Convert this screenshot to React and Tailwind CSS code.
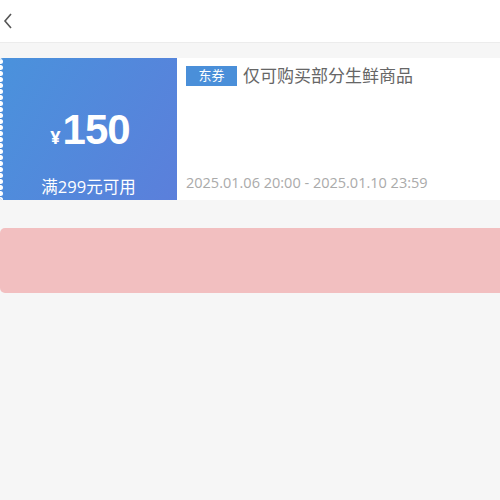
export default function App() {
  const dots = Array.from({ length: 24 });
  return (
    <div className="w-[500px] h-[500px] bg-[#f6f6f6] overflow-hidden" style={{ fontFamily: '"Open Sans", "Noto Sans CJK SC", sans-serif' }}>
      <div className="h-[43px] bg-white border-b border-[#ececec] flex items-center pl-[2px]">
        <svg width="12" height="18" viewBox="0 0 12 18" fill="none">
          <path d="M9 2 L3 9 L9 16" stroke="#555" strokeWidth="1.6" />
        </svg>
      </div>
      <div className="mt-[15px] flex h-[142px] w-[510px]">
        <div className="relative w-[177px] h-full rounded-l-[3px] bg-[linear-gradient(120deg,#4a92dc,#5b7fdb)] flex flex-col items-center text-white overflow-hidden">
          <div className="absolute left-[-3px] top-[1px] flex flex-col gap-[1px]">
            {dots.map((_, i) => (
              <div key={i} className="w-[6px] h-[5px] rounded-full bg-white" />
            ))}
          </div>
          <div className="mt-[51px] flex items-baseline ml-[3px]">
            <span className="text-[18px] font-bold mr-[2px]">¥</span>
            <span className="text-[42px] font-bold leading-none tracking-[-1px]" style={{ fontFamily: '"Liberation Sans", Arial, sans-serif' }}>150</span>
          </div>
          <div className="mt-auto mb-[3px] text-[16.5px] leading-[20px]">满299元可用</div>
        </div>
        <div className="flex-1 bg-white flex flex-col pl-[9px]">
          <div className="mt-[8px] flex items-center">
            <span className="bg-[#4a8fd9] text-white text-[13px] w-[51px] h-[20px] flex items-center justify-center">东券</span>
            <span className="ml-[6px] text-[17px] text-[#666] leading-[20px]">仅可购买部分生鲜商品</span>
          </div>
          <div className="mt-auto mb-[8px] text-[14.5px] text-[#aaa] leading-[18px]">2025.01.06 20:00 - 2025.01.10 23:59</div>
        </div>
      </div>
      <div className="mt-[28px] h-[65px] w-[510px] rounded-[5px] bg-[#f2bfc0]" />
    </div>
  );
}
